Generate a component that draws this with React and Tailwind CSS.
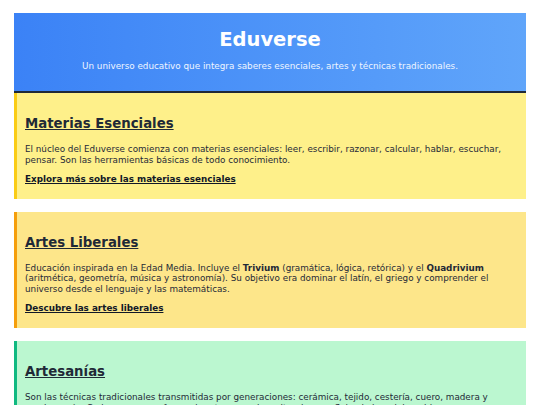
import React from 'react'

const sections = [
  {
    title: 'Materias Esenciales',
    bg: 'bg-[#fef08a]',
    border: 'border-[#facc15]',
    body: (
      <>
        El núcleo del Eduverse comienza con materias esenciales: leer, escribir, razonar, calcular, hablar, escuchar,
        pensar. Son las herramientas básicas de todo conocimiento.
      </>
    ),
    link: 'Explora más sobre las materias esenciales',
  },
  {
    title: 'Artes Liberales',
    bg: 'bg-[#fde68a]',
    border: 'border-[#f59e0b]',
    body: (
      <>
        Educación inspirada en la Edad Media. Incluye el <strong>Trivium</strong> (gramática, lógica, retórica) y el{' '}
        <strong>Quadrivium</strong> (aritmética, geometría, música y astronomía). Su objetivo era dominar el latín, el
        griego y comprender el universo desde el lenguaje y las matemáticas.
      </>
    ),
    link: 'Descubre las artes liberales',
  },
  {
    title: 'Artesanías',
    bg: 'bg-[#bbf7d0]',
    border: 'border-[#10b981]',
    body: (
      <>
        Son las técnicas tradicionales transmitidas por generaciones: cerámica, tejido, cestería, cuero, madera y
        muchas más. Cada una es una forma de arte manual y cultural que refleja el alma del pueblo.
      </>
    ),
    link: 'Conoce las artesanías',
  },
]

export default function App() {
  return (
    <div className="min-h-screen bg-white px-[14px] pt-[13px] text-[#1f2937]" style={{ fontFamily: '"DejaVu Sans", Verdana, sans-serif' }}>
      {/* Header */}
      <header className="bg-gradient-to-r from-[#3b82f6] to-[#60a5fa] border-b-2 border-[#1f2937] text-white text-center pt-[15px] pb-[20px]">
        <h1 className="text-[19.5px] font-bold leading-[24px]">Eduverse</h1>
        <p className="text-[8.8px] leading-[10px] mt-[9px] text-blue-50">
          Un universo educativo que integra saberes esenciales, artes y técnicas tradicionales.
        </p>
      </header>

      <div className="flex flex-col gap-[13px]">
        {sections.map((s) => (
          <section key={s.title} className={`${s.bg} ${s.border} border-l-[3px] pl-[8px] pr-[12px] pt-[23px] pb-[14px]`}>
            <h2 className="text-[13.3px] font-bold underline leading-[16px] text-[#1f2937]">{s.title}</h2>
            <p className="text-[8.8px] leading-[10.8px] mt-[12px]">{s.body}</p>
            <a href="#" className="block mt-[8px] text-[8.8px] font-bold underline leading-[11px] text-[#111827]">
              {s.link}
            </a>
          </section>
        ))}
      </div>
    </div>
  )
}
